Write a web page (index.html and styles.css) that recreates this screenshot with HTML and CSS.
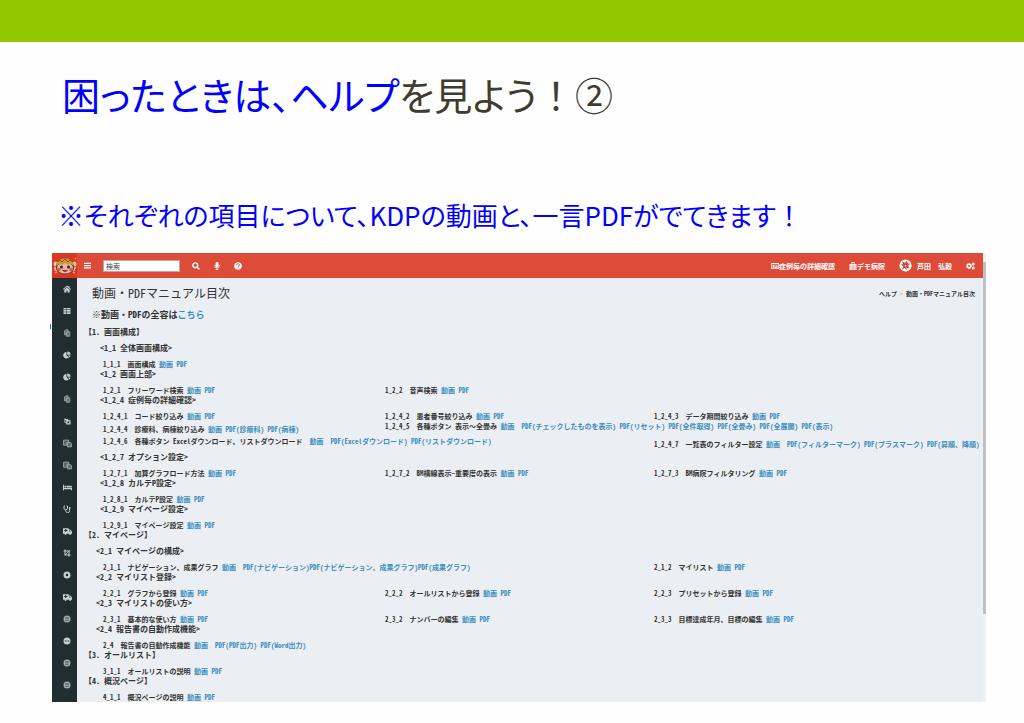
FILE: index.html
```html
<!DOCTYPE html>
<html lang="ja">
<head>
<meta charset="utf-8">
<title>困ったときは、ヘルプを見よう！②</title>
<link rel="stylesheet" href="styles.css">
</head>
<body>
<svg class="defs" aria-hidden="true">
  <symbol id="home" viewBox="0 0 16 16"><path d="M8 1 0 8l1 1.300L8 3.400l7 5.900L16 8l-3-2.600V2h-2v1.700zM8 4.800l-5.500 4.600V15H7v-4h2v4h4.500V9.400z"/></symbol>
  <symbol id="table" viewBox="0 0 16 16"><path d="M1 2h5v3H1zM7 2h8v3H7zM1 6h5v3.500H1zM7 6h8v3.500H7zM1 10.500h5V14H1zM7 10.500h8V14H7z"/></symbol>
  <symbol id="copy" viewBox="0 0 16 16"><path fill-opacity=".55" stroke="currentColor" stroke-width="1.500" d="M5.500 1.500H10V5L7 8v3.500H3V4z"/><path fill-opacity=".55" stroke="currentColor" stroke-width="1.500" d="M9 5.500h4.500v9H6.500V8z"/></symbol>
  <symbol id="pie" viewBox="0 0 16 16"><path d="M7 2v6.500l4.500 4.600A6.500 6.500 0 1 1 7 2zM8.500 1A6.500 6.500 0 0 1 15 7.500H8.500zM9.500 9H15a6.500 6.500 0 0 1-1.800 3.800z"/></symbol>
  <symbol id="clone" viewBox="0 0 16 16"><path fill-rule="evenodd" d="M1 1h3v1.500h5L10 5h5v10H5v-4H1zm2 4v4h2V5zm5 3v4h4V8z"/></symbol>
  <symbol id="docs" viewBox="0 0 16 16"><path fill-opacity=".4" stroke="currentColor" stroke-width="1.500" d="M1 2h9v3H8L6.500 7v4H1z"/><path fill-opacity=".5" stroke="currentColor" stroke-width="1.500" d="M8 6h5l2 2v6H8z"/></symbol>
  <symbol id="bed" viewBox="0 0 16 16"><path d="M0 3h1.800v6H16v4h-1.800v-2H1.800v2H0zM2.500 5h3.600v3H2.500zM7 5h7a2 2 0 0 1 2 2v1H7z"/></symbol>
  <symbol id="steth" viewBox="0 0 16 16"><path fill="none" stroke="currentColor" stroke-width="1.900" d="M4 2H2v4a3.500 3.500 0 0 0 7 0V2H7M5.500 10v1.500a3.800 3.800 0 0 0 7.700 0V8"/><circle cx="13.200" cy="6" r="2"/></symbol>
  <symbol id="truck" viewBox="0 0 16 16"><path fill-rule="evenodd" d="M0 2h10v2.500h3L16 8v4h-1.500a2 2 0 0 1-4 0h-4a2 2 0 0 1-4 0H0zM4 3.500v2H2v1.600h2v2h1.700v-2h2V5.500h-2v-2zM11 6v2h3l-1.500-2z"/></symbol>
  <symbol id="crop" viewBox="0 0 16 16"><path fill="none" stroke="currentColor" stroke-width="2.200" d="M4 1v11h11M1 4h11v11"/><path fill="none" stroke="currentColor" stroke-width="1.500" d="m5 11 9-9"/></symbol>
  <symbol id="disc" viewBox="0 0 16 16"><path fill-rule="evenodd" d="M8 1a7 7 0 1 0 0 14A7 7 0 0 0 8 1zm0 4.500a2.500 2.500 0 1 1 0 5 2.500 2.500 0 0 1 0-5z"/></symbol>
  <symbol id="badge" viewBox="0 0 16 16"><path fill-rule="evenodd" d="M8 1a7 7 0 1 0 0 14A7 7 0 0 0 8 1zM4.500 4.500h7v1h-7zm0 2.700H7v1.300H4.500zm4 0h3v1.300h-3zm-4 3.200h7v1h-7z"/></symbol>
  <symbol id="dots" viewBox="0 0 16 16"><path fill-rule="evenodd" d="M8 1a7 7 0 1 0 0 14A7 7 0 0 0 8 1zM3.500 7H6v2H3.500zm3.500 0h2v2H7zm3 0h2.500v2H10z"/></symbol>
  <symbol id="bars" viewBox="0 0 16 16"><path d="M0 1.500h16v3H0zM0 6.700h16v3H0zM0 12h16v3H0z"/></symbol>
  <symbol id="search" viewBox="0 0 16 16"><path fill="none" stroke="currentColor" stroke-width="3" d="m10 10 4.800 4.800"/><circle cx="6.500" cy="6.500" r="4.800" fill="none" stroke="currentColor" stroke-width="2.700"/></symbol>
  <symbol id="mic" viewBox="0 0 16 16"><rect x="5" y="0" width="6" height="10" rx="3"/><path fill="none" stroke="currentColor" stroke-width="1.700" d="M3.500 6v1.500a4.500 4.500 0 0 0 9 0V6M8 12v3M5 15.200h6"/></symbol>
  <symbol id="help" viewBox="0 0 16 16"><circle cx="8" cy="8" r="7.500"/><path class="cut" d="M5 6.500C5 2.500 11 2.500 11 6.200 11 8 8.200 8 8.200 10M8.200 11v2"/></symbol>
  <symbol id="card" viewBox="0 0 16 16"><path fill-rule="evenodd" d="M0 2h16v12H0zm1.500 2v8.500h13V4zM3 5.500h4v4H3zM8.500 5.500H13V7H8.500zm0 2.500H13v1.500H8.500zM3 10.500h10V12H3z"/></symbol>
  <symbol id="hospital" viewBox="0 0 16 16"><path fill-rule="evenodd" d="M5 0h6v4h4v11h1v1H0v-1h1V4h4zm2.300 1.500v1.200H6.200V4h1.100v1.200h1.400V4h1.100V2.700H8.700V1.500zM3 7v2h2V7zm4 0v2h2V7zm4 0v2h2V7zm-8 4v2h2v-2zm8 0v2h2v-2zm-4 0v4h2v-4z"/></symbol>
  <symbol id="gears" viewBox="0 0 18 16"><circle cx="6" cy="8" r="3.500" fill="none" stroke="currentColor" stroke-width="2.800"/><circle cx="6" cy="8" r="5.300" fill="none" stroke="currentColor" stroke-width="1.800" stroke-dasharray="2.100 2.060"/><circle cx="14.500" cy="4" r="1.900" fill="none" stroke="currentColor" stroke-width="2.200"/><circle cx="14.500" cy="12" r="1.900" fill="none" stroke="currentColor" stroke-width="2.200"/></symbol>
</svg>
<main class="slide">
  <div class="band"></div>
  <h1 class="title"><span class="blue">困ったときは、ヘルプ</span>を見よう<span class="full">！②</span></h1>
  <p class="lead">※それぞれの項目について、KDPの動画と、一言PDFがでてきます<span class="full">！</span></p>
  <section class="app">
    <span class="speck"></span>
    <header class="topbar">
      <a class="logo" href="#" aria-label="ロゴ"><svg viewBox="0 0 24 20"><ellipse cx="2.500" cy="8" rx="2" ry="2.500" fill="#f8c9a8"/><ellipse cx="21.500" cy="8" rx="2" ry="2.500" fill="#f8c9a8"/><path d="M2 11 4 15M22 11l-2 4" stroke="#f3e8df" stroke-width="2"/><ellipse cx="12" cy="11" rx="9.500" ry="7.500" fill="#6f3a32"/><ellipse cx="12" cy="12" rx="8" ry="5.500" fill="#eab3a0"/><path d="M3 10C3 0 21 0 21 10l-3-2-3 1-3-2-3 2-3-1z" fill="#cf973c"/><path d="M4 6 7 4l2 2 3-3 3 3 2-2 3 2" stroke="#83512a" fill="none"/><circle cx="8.500" cy="11" r="1.500" fill="#2f2b2b"/><circle cx="15.500" cy="11" r="1.500" fill="#2f2b2b"/><circle cx="6" cy="13.500" r="1.700" fill="#dd5b4e"/><circle cx="18" cy="13.500" r="1.700" fill="#dd5b4e"/><path d="M9 14q3 4 6 0z" fill="#a42622"/><path d="m2 17 2-1M22 17l-2-1M1 14h1M22 3l1-1" stroke="#f1a12f" stroke-width="1.500"/></svg></a>
      <button class="tool bars" aria-label="メニュー"><svg><use href="#bars"/></svg></button>
      <input class="search" type="text" placeholder="検索" aria-label="検索">
      <button class="tool" aria-label="検索"><svg><use href="#search"/></svg></button>
      <button class="tool" aria-label="音声検索"><svg><use href="#mic"/></svg></button>
      <button class="tool" aria-label="ヘルプ"><svg><use href="#help"/></svg></button>
      <nav class="account">
        <a href="#"><svg><use href="#card"/></svg>症例毎の詳細確認</a>
        <a href="#"><svg><use href="#hospital"/></svg>デモ病院</a>
        <a href="#"><svg class="avatar" viewBox="0 0 14 14"><circle cx="7" cy="7" r="6.500" fill="#fff"/><path d="M3 2.500 6 4l3-2.500L9 5l3-.500-2 3 1.500 2.500L8.500 9 8 12 6 9.500 3 11.500 4.500 8 2 6l2.500-.500z" fill="#cf5a47"/><path d="m4 4 6 6M9.500 4 5 10" stroke="#7c3c2b"/><path d="m6 6 2 1-1 2z" fill="#f7dcc9"/></svg>芦田　弘毅</a>
        <a href="#" aria-label="設定"><svg class="gears"><use href="#gears"/></svg></a>
      </nav>
    </header>
    <nav class="side">
      <a href="#" aria-label="ホーム"><svg><use href="#home"/></svg></a>
      <a href="#" aria-label="一覧"><svg><use href="#table"/></svg></a>
      <a href="#" aria-label="資料"><svg class="dim"><use href="#copy"/></svg></a>
      <a href="#" aria-label="グラフ"><svg><use href="#pie"/></svg></a>
      <a href="#" aria-label="グラフ"><svg><use href="#pie"/></svg></a>
      <a href="#" aria-label="資料"><svg class="dim"><use href="#copy"/></svg></a>
      <a href="#" aria-label="複製"><svg class="small"><use href="#clone"/></svg></a>
      <a href="#" aria-label="文書"><svg class="wide dim"><use href="#docs"/></svg></a>
      <a href="#" aria-label="文書"><svg class="wide dim"><use href="#docs"/></svg></a>
      <a href="#" aria-label="病床"><svg class="wide"><use href="#bed"/></svg></a>
      <a href="#" aria-label="診療"><svg><use href="#steth"/></svg></a>
      <a href="#" aria-label="救急"><svg class="wide"><use href="#truck"/></svg></a>
      <a href="#" aria-label="範囲"><svg><use href="#crop"/></svg></a>
      <a href="#" aria-label="記録"><svg><use href="#disc"/></svg></a>
      <a href="#" aria-label="救急"><svg class="wide"><use href="#truck"/></svg></a>
      <a href="#" aria-label="項目"><svg class="dim"><use href="#badge"/></svg></a>
      <a href="#" aria-label="項目"><svg><use href="#dots"/></svg></a>
      <a href="#" aria-label="項目"><svg class="dim"><use href="#badge"/></svg></a>
      <a href="#" aria-label="項目"><svg class="dim"><use href="#badge"/></svg></a>
    </nav>
    <div class="content">
      <div class="pagehead">
        <h2>動画・PDFマニュアル目次</h2>
        <nav class="crumbs"><a href="#">ヘルプ</a><span class="sep">&gt;</span><span>動画・PDFマニュアル目次</span></nav>
      </div>
      <p class="all">※動画・PDFの全容は<a href="#">こちら</a></p>

      <h3>【1. 画面構成】</h3>
      <h4>&lt;1_1 全体画面構成&gt;</h4>
      <div class="row"><p>1_1_1　画面構成 <a href="#">動画</a> <a href="#">PDF</a></p></div>
      <h4>&lt;1_2 画面上部&gt;</h4>
      <div class="row"><p>1_2_1　フリーワード検索 <a href="#">動画</a> <a href="#">PDF</a></p><p>1_2_2　音声検索 <a href="#">動画</a> <a href="#">PDF</a></p></div>
      <h4>&lt;1_2_4 症例毎の詳細確認&gt;</h4>
      <div class="row"><p>1_2_4_1　コード絞り込み <a href="#">動画</a> <a href="#">PDF</a></p><p>1_2_4_2　患者番号絞り込み <a href="#">動画</a> <a href="#">PDF</a></p><p>1_2_4_3　データ期間絞り込み <a href="#">動画</a> <a href="#">PDF</a></p></div>
      <div class="row"><p class="drop">1_2_4_4　診療科、病棟絞り込み <a href="#">動画</a> <a href="#">PDF(診療科)</a> <a href="#">PDF(病棟)</a></p><p>1_2_4_5　各種ボタン 表示～全畳み <a href="#">動画</a>　<a href="#">PDF(チェックしたものを表示)</a> <a href="#">PDF(リセット)</a> <a href="#">PDF(全件取得)</a> <a href="#">PDF(全畳み)</a> <a href="#">PDF(全展開)</a> <a href="#">PDF(表示)</a></p></div>
      <div class="row spaced"><p>1_2_4_6　各種ボタン Excelダウンロード、リストダウンロード　<a href="#">動画</a>　<a href="#">PDF(Excelダウンロード)</a> <a href="#">PDF(リストダウンロード)</a></p><p class="third drop">1_2_4_7　一覧表のフィルター設定 <a href="#">動画</a>　<a href="#">PDF(フィルターマーク)</a> <a href="#">PDF(プラスマーク)</a> <a href="#">PDF(昇順、降順)</a></p></div>
      <h4>&lt;1_2_7 オプション設定&gt;</h4>
      <div class="row"><p>1_2_7_1　加算グラフロード方法 <a href="#">動画</a> <a href="#">PDF</a></p><p>1_2_7_2　BM横線表示~重要度の表示 <a href="#">動画</a> <a href="#">PDF</a></p><p>1_2_7_3　BM病院フィルタリング <a href="#">動画</a> <a href="#">PDF</a></p></div>
      <h4>&lt;1_2_8 カルテP設定&gt;</h4>
      <div class="row"><p>1_2_8_1　カルテP設定 <a href="#">動画</a> <a href="#">PDF</a></p></div>
      <h4>&lt;1_2_9 マイページ設定&gt;</h4>
      <div class="row"><p>1_2_9_1　マイページ設定 <a href="#">動画</a> <a href="#">PDF</a></p></div>

      <h3>【2. マイページ】</h3>
      <h4 class="out">&lt;2_1 マイページの構成&gt;</h4>
      <div class="row"><p>2_1_1　ナビゲーション、成果グラフ <a href="#">動画</a>　<a href="#">PDF(ナビゲーション)</a><a href="#">PDF(ナビゲーション、成果グラフ)</a><a href="#">PDF(成果グラフ)</a></p><p class="third">2_1_2　マイリスト <a href="#">動画</a> <a href="#">PDF</a></p></div>
      <h4 class="out">&lt;2_2 マイリスト登録&gt;</h4>
      <div class="row"><p>2_2_1　グラフから登録 <a href="#">動画</a> <a href="#">PDF</a></p><p>2_2_2　オールリストから登録 <a href="#">動画</a> <a href="#">PDF</a></p><p>2_2_3　プリセットから登録 <a href="#">動画</a> <a href="#">PDF</a></p></div>
      <h4 class="out">&lt;2_3 マイリストの使い方&gt;</h4>
      <div class="row"><p>2_3_1　基本的な使い方 <a href="#">動画</a> <a href="#">PDF</a></p><p>2_3_2　ナンバーの編集 <a href="#">動画</a> <a href="#">PDF</a></p><p>2_3_3　目標達成年月、目標の編集 <a href="#">動画</a> <a href="#">PDF</a></p></div>
      <h4 class="out">&lt;2_4 報告書の自動作成機能&gt;</h4>
      <div class="row"><p>2_4　報告書の自動作成機能 <a href="#">動画</a>　<a href="#">PDF(PDF出力)</a> <a href="#">PDF(Word出力)</a></p></div>

      <h3>【3. オールリスト】</h3>
      <div class="row"><p>3_1_1　オールリストの説明 <a href="#">動画</a> <a href="#">PDF</a></p></div>
      <h3>【4. 概況ページ】</h3>
      <div class="row"><p>4_1_1　概況ページの説明 <a href="#">動画</a> <a href="#">PDF</a></p></div>
    </div>
    <div class="scroll"><div class="thumb"></div></div>
  </section>
</main>
</body>
</html>
```

FILE: styles.css
```css
* { box-sizing: border-box; }
body {
  margin: 0;
  background: #fefefe;
  color: #333;
  font-family: "Noto Sans CJK JP", sans-serif;
}
h1, h2, h3, h4, p { margin: 0; font-weight: 400; }
a { color: #3c8dbc; text-decoration: none; }
svg { width: 8px; height: 8px; fill: currentColor; flex: none; }
.defs { display: none; }

.band { height: 42px; background: #93c700; }
.title {
  padding: 24px 62px 0;
  font-size: 38px;
  line-height: 56px;
  color: #3e3d2d;
  font-feature-settings: "palt";
}
.blue { color: #00f; }
.full { font-feature-settings: normal; }
.lead {
  padding: 75px 58px 0;
  font-size: 26px;
  line-height: 36px;
  color: #00f;
  font-feature-settings: "palt";
}

.app {
  position: relative;
  display: grid;
  grid-template-columns: 25px 1fr 3px;
  grid-template-rows: 25px auto;
  margin: 20px 38px 0 52px;
  background: #ebeff4;
  font-family: "Noto Sans Mono CJK JP", "Noto Sans CJK JP", monospace;
  font-size: 7px;
}
.speck {
  position: absolute;
  left: -2px;
  top: 71px;
  width: 1px;
  height: 5px;
  background: #1f6fe0;
}

.topbar {
  grid-column: 1 / 3;
  display: flex;
  align-items: center;
  background: #dd4b39;
  color: #fff;
}
.logo {
  width: 25px;
  height: 25px;
  display: flex;
  align-items: center;
  justify-content: center;
  background: #d73925;
}
.logo svg { width: 24px; height: 20px; }
.tool {
  width: 21px;
  height: 25px;
  padding: 0;
  border: 0;
  background: none;
  color: #fff;
  display: flex;
  align-items: center;
  justify-content: center;
}
.bars { width: 20px; margin-right: 6px; }
.bars svg { width: 7px; height: 7px; }
.search {
  width: 77px;
  height: 12px;
  margin-right: 5px;
  padding: 0 2px;
  border: 1px solid #b9a9a6;
  background: #fff;
  font: inherit;
  color: #333;
}
.search::placeholder { color: #444; }
.cut { fill: none; stroke: #dd4b39; stroke-width: 2; }
.account {
  margin-left: auto;
  padding-right: 8px;
  display: flex;
  align-items: center;
  gap: 14px;
  font-weight: 700;
}
.account a { display: flex; align-items: center; color: #fff; }
.account .avatar { width: 13px; height: 13px; margin-right: 5px; }
.account .gears { width: 9px; }

.side { background: #222d32; color: #c3ced4; }
.side a {
  height: 22px;
  padding-left: 5px;
  display: flex;
  align-items: center;
  justify-content: center;
  color: inherit;
}
.side .wide { width: 9px; height: 9px; }
.side .small { width: 7px; height: 7px; }
.side .dim { opacity: 0.8; }

.content { min-width: 0; padding: 4px 0 0 7px; white-space: nowrap; }
.pagehead {
  display: flex;
  justify-content: space-between;
  align-items: center;
  padding: 0 8px;
}
.pagehead h2 { font-size: 12px; line-height: 22px; }
.crumbs { display: flex; gap: 3px; font-size: 6px; font-weight: 700; }
.crumbs a { color: inherit; }
.crumbs .sep { color: #bbb; }
.all {
  padding: 4px 8px 5px;
  font-size: 9px;
  line-height: 14px;
  font-weight: 700;
}
.content h3, .content h4 {
  font-size: 8px;
  line-height: 10px;
  padding-bottom: 6px;
  font-weight: 700;
}
.content h4 { padding-left: 16px; }
.content .out { padding-left: 12px; }
.row {
  display: grid;
  grid-template-columns: 282fr 269fr 329fr;
  align-items: start;
  padding-left: 19px;
  line-height: 10px;
}
.row p { min-width: 0; font-weight: 700; }
.row .drop { padding-top: 3px; }
.row .third { grid-column: 3; }
.spaced { margin: 2px 0 3px; }

.scroll { grid-column: 3; grid-row: 1 / 3; padding-top: 9px; background: #f1f1f1; }
.thumb { height: 80%; background: #c1c1c1; }
```
